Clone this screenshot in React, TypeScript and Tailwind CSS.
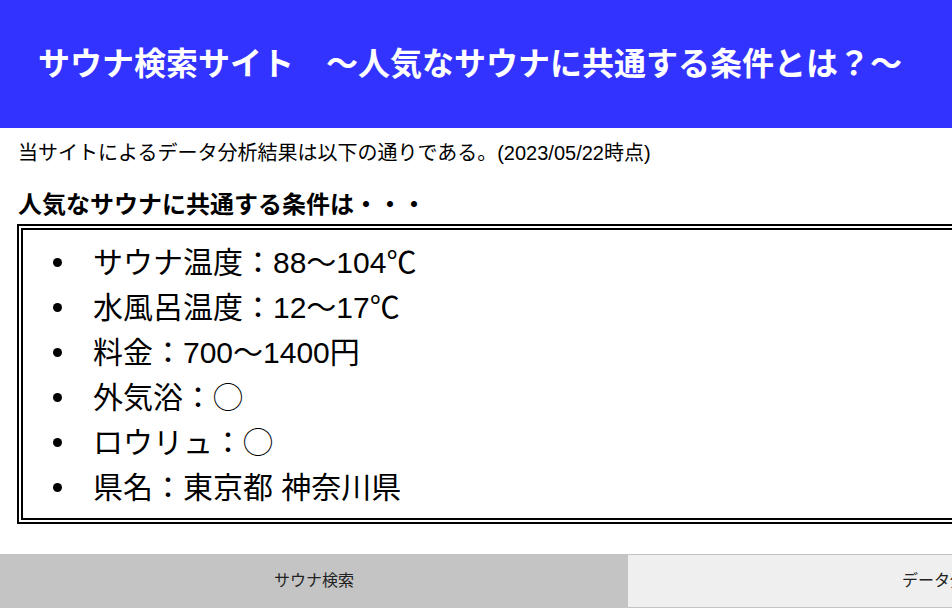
const items = [
  'サウナ温度：88～104℃',
  '水風呂温度：12～17℃',
  '料金：700～1400円',
  '外気浴：◯',
  'ロウリュ：◯',
  '県名：東京都 神奈川県',
];

export default function App() {
  return (
    <div
      className="w-[952px] h-[610px] overflow-hidden bg-white text-black"
      style={{ fontFamily: '"Liberation Sans", "Noto Sans CJK JP", sans-serif' }}
    >
      <div className="w-[1256px]">
        <header className="h-[128px] bg-[#3333ff] flex items-center pl-[38px]">
          <h1 className="text-[32px] font-bold text-white leading-none">
            サウナ検索サイト　～人気なサウナに共通する条件とは？～
          </h1>
        </header>

        <p className="mt-[10px] ml-[18px] text-[20px] leading-[30px]">
          当サイトによるデータ分析結果は以下の通りである。(2023/05/22時点)
        </p>

        <h2 className="mt-[22px] ml-[18px] text-[24px] font-bold leading-[30px]">
          人気なサウナに共通する条件は・・・
        </h2>

        <div className="mt-[4px] ml-[17px] w-[1222px] border-[6px] border-double border-black pt-[10px] pb-[8px]">
          <ul className="text-[30px] leading-[45px]">
            {items.map((item) => (
              <li key={item} className="flex items-center">
                <span className="ml-[30px] mr-[31px] w-[9px] h-[9px] rounded-full bg-black shrink-0" />
                <span>{item}</span>
              </li>
            ))}
          </ul>
        </div>

        <nav className="mt-[30px] flex text-[16px] text-[#222]">
          <div className="w-[628px] h-[54px] bg-[#c4c4c4] flex items-center justify-center">
            サウナ検索
          </div>
          <div className="w-[628px] h-[54px] bg-[#efefef] border-y border-[#c4c4c4] flex items-center justify-center">
            データ分析
          </div>
        </nav>
      </div>
    </div>
  );
}
